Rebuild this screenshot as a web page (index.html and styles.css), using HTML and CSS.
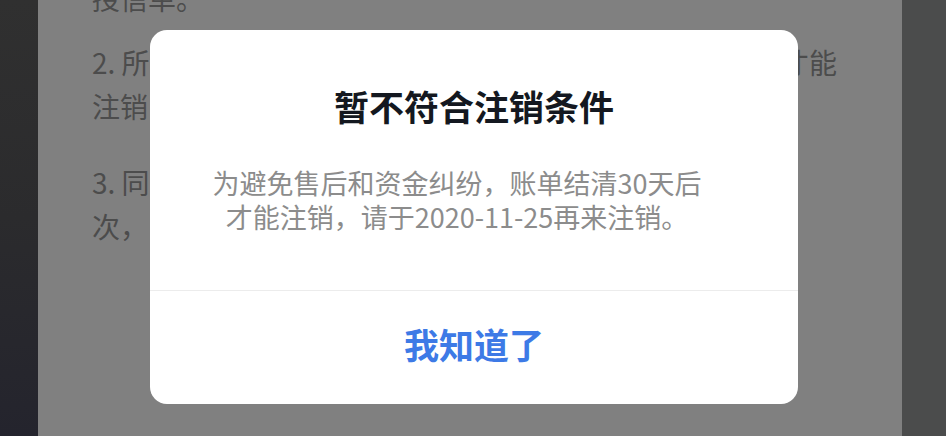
FILE: index.html
```html
<!DOCTYPE html>
<html lang="zh-CN">
<head>
<meta charset="utf-8">
<title>暂不符合注销条件</title>
<link rel="stylesheet" href="styles.css">
</head>
<body>
<div class="screen">
  <div class="edge edge-left"></div>
  <div class="stage">
    <div class="doc">
      <div class="para para-first">
        <div class="line">授信单。</div>
      </div>
      <div class="para">
        <div class="line"><span>2. 所</span><span>才能</span></div>
        <div class="line"><span>注销</span></div>
      </div>
      <div class="para">
        <div class="line"><span>3. 同</span><span class="tail">日</span></div>
        <div class="line"><span>次，</span></div>
      </div>
    </div>
    <div class="modal">
      <div class="modal-body">
        <div class="modal-title">暂不符合注销条件</div>
        <div class="modal-text">为避免售后和资金纠纷，账单结清30天后<br>才能注销，请于2020-11-25再来注销。</div>
      </div>
      <div class="modal-divider"></div>
      <div class="modal-action">我知道了</div>
    </div>
  </div>
  <div class="edge edge-right"></div>
</div>
</body>
</html>
```
FILE: styles.css
```css
html, body {
  margin: 0;
  padding: 0;
}
body {
  width: 946px;
  height: 436px;
  overflow: hidden;
  font-family: "Noto Sans CJK SC", "Noto Sans", sans-serif;
  background: #808080;
}
.screen {
  display: flex;
  width: 946px;
  height: 436px;
}
.edge {
  flex: none;
  height: 100%;
}
.edge-left {
  width: 38px;
  background: linear-gradient(to bottom, #303030 0%, #2b2b2d 50%, #24242d 100%);
}
.edge-right {
  width: 44px;
  background: #4b4c4c;
}
.stage {
  position: relative;
  flex: none;
  width: 864px;
  height: 100%;
  background: #808080;
  overflow: hidden;
}
.doc {
  margin-top: -24px;
  padding: 0 65px 0 54px;
  color: #4c4c4c;
  font-size: 28px;
  line-height: 44px;
}
.para {
  margin-bottom: 32px;
}
.para-first {
  margin-bottom: 20px;
}
.line {
  display: flex;
  justify-content: space-between;
  white-space: nowrap;
  overflow: hidden;
}
.tail {
  margin-right: 36px;
}
.modal {
  position: absolute;
  left: 112px;
  top: 30px;
  width: 648px;
  height: 374px;
  background: #ffffff;
  border-radius: 17px;
  display: flex;
  flex-direction: column;
  overflow: hidden;
}
.modal-body {
  padding: 52px 0 56px;
  display: flex;
  flex-direction: column;
  align-items: stretch;
}
.modal-title {
  text-align: center;
  font-size: 35px;
  line-height: 48px;
  font-weight: 700;
  color: #141820;
}
.modal-text {
  margin-top: 36px;
  padding: 0 76px 0 42px;
  text-align: center;
  font-size: 27px;
  line-height: 34px;
  color: #8c8c8c;
  white-space: nowrap;
}
.modal-divider {
  height: 1px;
  background: #ececec;
}
.modal-action {
  flex: 1;
  display: flex;
  align-items: center;
  justify-content: center;
  padding-bottom: 8px;
  font-size: 35px;
  line-height: 48px;
  font-weight: 700;
  color: #3d7ae6;
}
```
